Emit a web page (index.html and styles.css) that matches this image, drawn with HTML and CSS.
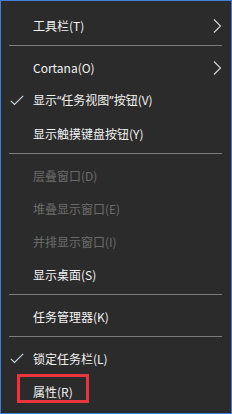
FILE: index.html
```html
<!DOCTYPE html>
<html lang="zh-CN">
<head>
<meta charset="utf-8">
<link rel="stylesheet" href="styles.css">
</head>
<body>
<div class="menu">
  <div class="item"><span class="check"></span><span class="label">工具栏(T)</span><span class="arrow"><svg width="9" height="14" viewBox="0 0 9 14"><polyline points="1,0.5 7.5,7 1,13.5" fill="none" stroke="#d8d8d8" stroke-width="1.1"/></svg></span></div>
  <div class="sep"></div>
  <div class="item"><span class="check"></span><span class="label">Cortana(O)</span><span class="arrow"><svg width="9" height="14" viewBox="0 0 9 14"><polyline points="1,0.5 7.5,7 1,13.5" fill="none" stroke="#d8d8d8" stroke-width="1.1"/></svg></span></div>
  <div class="item"><span class="check"><svg width="14" height="11" viewBox="0 0 14 11"><polyline points="0.8,5.8 4.5,9.5 13.2,0.8" fill="none" stroke="#c9d6ea" stroke-width="1.1"/></svg></span><span class="label">显示<span class="q">“</span>任务视图<span class="q">”</span>按钮(V)</span><span class="arrow"></span></div>
  <div class="item"><span class="check"></span><span class="label">显示触摸键盘按钮(Y)</span><span class="arrow"></span></div>
  <div class="sep"></div>
  <div class="item disabled"><span class="check"></span><span class="label">层叠窗口(D)</span><span class="arrow"></span></div>
  <div class="item disabled"><span class="check"></span><span class="label">堆叠显示窗口(E)</span><span class="arrow"></span></div>
  <div class="item disabled"><span class="check"></span><span class="label">并排显示窗口(I)</span><span class="arrow"></span></div>
  <div class="item"><span class="check"></span><span class="label">显示桌面(S)</span><span class="arrow"></span></div>
  <div class="sep"></div>
  <div class="item"><span class="check"></span><span class="label">任务管理器(K)</span><span class="arrow"></span></div>
  <div class="sep"></div>
  <div class="item"><span class="check"><svg width="14" height="11" viewBox="0 0 14 11"><polyline points="0.8,5.8 4.5,9.5 13.2,0.8" fill="none" stroke="#c9d6ea" stroke-width="1.1"/></svg></span><span class="label">锁定任务栏(L)</span><span class="arrow"></span></div>
  <div class="item"><span class="check"></span><span class="label">属性(R)</span><span class="arrow"></span></div>
  <div class="highlight"></div>
</div>
</body>
</html>
```
FILE: styles.css
```css
html, body {
  margin: 0;
  padding: 0;
  background: #2b2b2b;
}
.menu {
  position: relative;
  box-sizing: border-box;
  width: 232px;
  height: 414px;
  border: 1px solid #3f7fd8;
  background: #2b2b2b;
  padding: 8px 0 5px 0;
  display: flex;
  flex-direction: column;
  font-family: "Noto Sans CJK SC", "Noto Sans", sans-serif;
  font-size: 12px;
  color: #f2f2f2;
}
.item {
  height: 33px;
  flex: none;
  display: grid;
  grid-template-columns: 32px 1fr 18px;
  align-items: center;
}
.check {
  display: flex;
  justify-content: flex-end;
  padding-right: 9px;
  align-items: center;
}
.check svg, .arrow svg { display: block; }
.label {
  white-space: nowrap;
  line-height: 16px;
}
.q {
  font-family: "Noto Sans", sans-serif;
}
.arrow {
  display: flex;
  align-items: center;
}
.disabled { color: #6b6b6b; }
.sep {
  flex: none;
  height: 1px;
  margin: 3px 9px 5px 8px;
  background: #7c7c7c;
}
.highlight {
  position: absolute;
  left: 16px;
  top: 373px;
  width: 66px;
  height: 23px;
  border: 3px solid #e8363c;
}
```
